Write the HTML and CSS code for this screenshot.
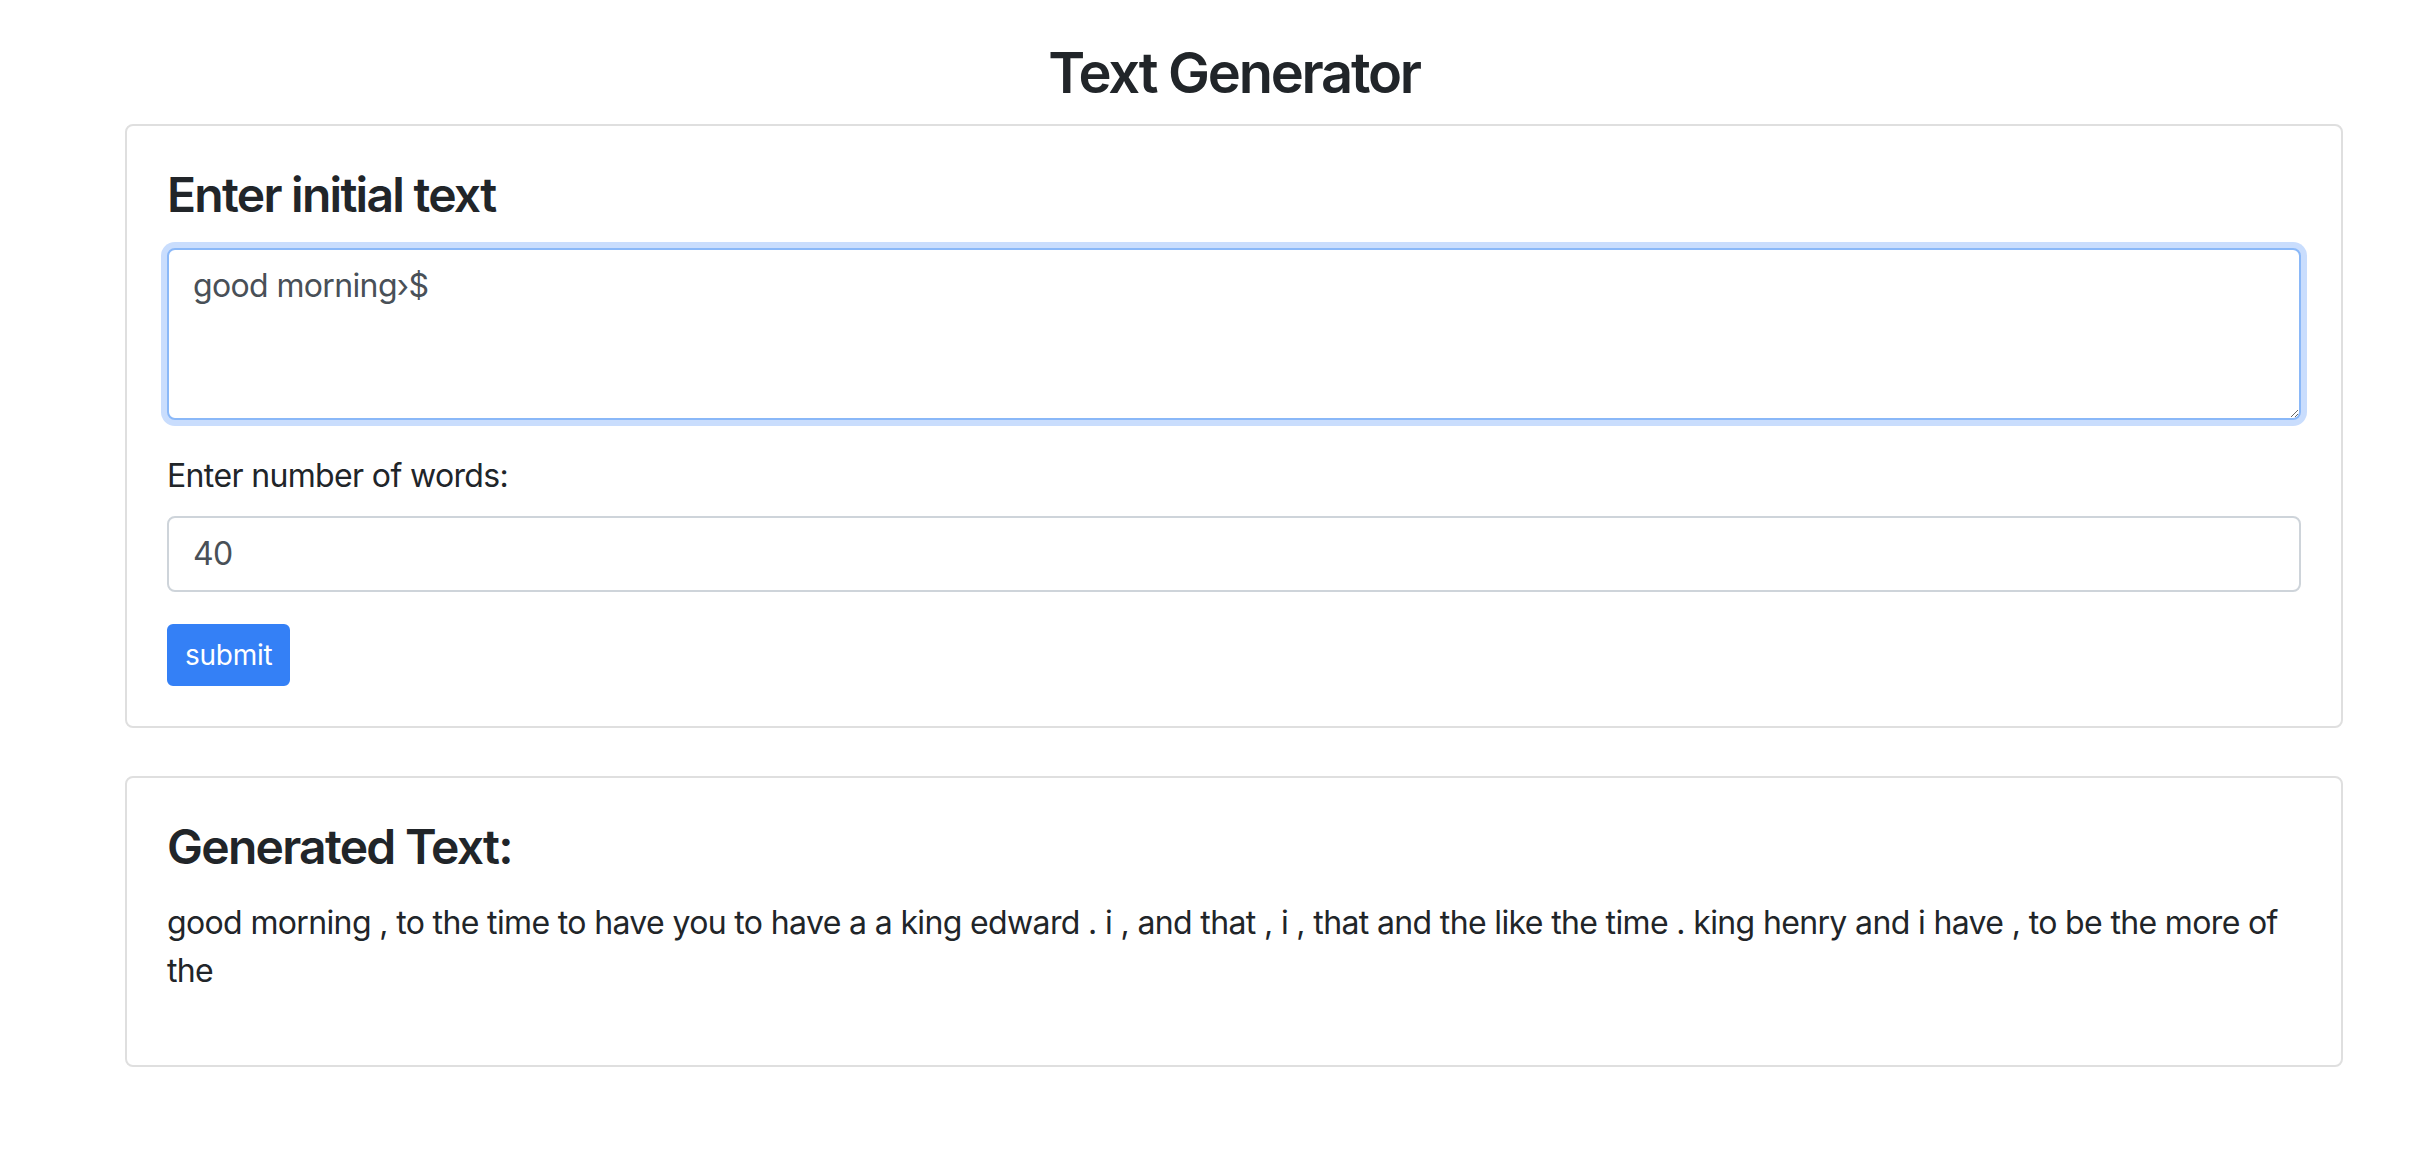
FILE: index.html
```html
<!DOCTYPE html>
<html lang="en">
<head>
<meta charset="utf-8">
<title>Text Generator</title>
<link rel="stylesheet" href="styles.css">
</head>
<body>
<div class="page">
  <h1 class="title">Text Generator</h1>
  <div class="card">
    <div class="card-body">
      <h2 class="card-heading">Enter initial text</h2>
      <form class="gen-form">
        <div class="form-group">
          <textarea class="field field-area is-focused" rows="3">good morning›$</textarea>
        </div>
        <div class="form-group">
          <label class="field-label" for="num">Enter number of words:</label>
          <input class="field" id="num" type="text" value="40">
        </div>
        <button class="btn" type="button">submit</button>
      </form>
    </div>
  </div>
  <div class="card card-result">
    <div class="card-body">
      <h2 class="card-heading">Generated Text:</h2>
      <p class="result">good morning , to the time to have you to have a a king edward . i , and that , i , that and the like the time . king henry and i have , to be the more of the</p>
    </div>
  </div>
</div>
</body>
</html>
```
FILE: styles.css
```css
* { box-sizing: border-box; }

html, body {
  margin: 0;
  background: #ffffff;
}

body {
  font-family: Inter, "Liberation Sans", Arial, sans-serif;
  font-size: 32px;
  line-height: 1.5;
  letter-spacing: -0.02em;
  color: #212529;
}

.page {
  width: 2218px;
  margin-left: 125px;
  padding-top: 40px;
}

.title {
  margin: 0 0 17px;
  font-size: 56px;
  line-height: 67px;
  font-weight: 560;
  letter-spacing: -0.04em;
  text-align: center;
}

.card {
  border: 2px solid #dfdfdf;
  border-radius: 8px;
  background: #fff;
}

.card-result {
  margin-top: 48px;
}

.card-body {
  padding: 40px;
}

.card-heading {
  margin: 0 0 24px;
  font-size: 48px;
  line-height: 57.6px;
  font-weight: 560;
  letter-spacing: -0.036em;
}

.gen-form {
  margin: 0;
}

.form-group {
  margin-bottom: 32px;
}

.field-label {
  display: inline-block;
  margin-bottom: 16px;
}

.field {
  display: block;
  width: 100%;
  height: 76px;
  padding: 12px 24px;
  font-family: inherit;
  font-size: 32px;
  line-height: 48px;
  letter-spacing: -0.02em;
  color: #495057;
  background: #fff;
  border: 2px solid #ced4da;
  border-radius: 8px;
  outline: none;
}

.field-area {
  height: 172px;
  resize: vertical;
}

.is-focused {
  border-color: #8ab8f8;
  box-shadow: 0 0 0 6px #c9ddfd;
}

.btn {
  display: inline-block;
  height: 62px;
  padding: 8px 16px;
  font-family: inherit;
  font-size: 28px;
  line-height: 42px;
  letter-spacing: -0.01em;
  color: #fff;
  background: #3480f6;
  border: 2px solid #3480f6;
  border-radius: 6px;
  cursor: pointer;
}

.result {
  margin: 0 0 30px;
}
```
